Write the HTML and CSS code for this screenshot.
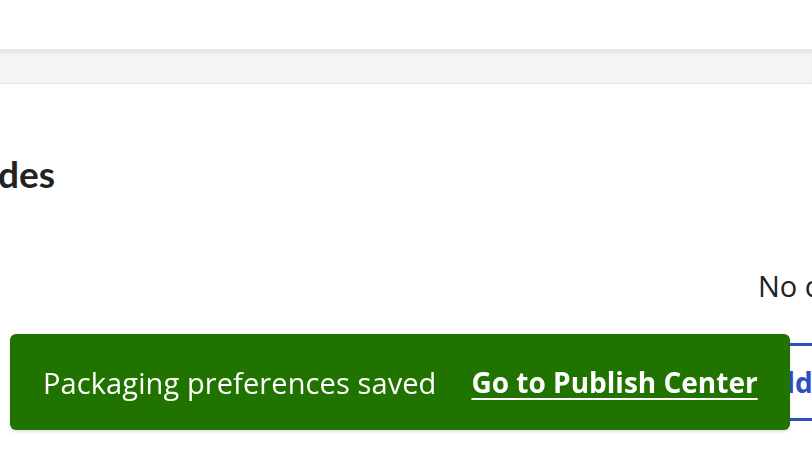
FILE: index.html
```html
<!DOCTYPE html>
<html lang="en">
<head>
<meta charset="utf-8">
<title>Packaging preferences</title>
<link rel="stylesheet" href="styles.css">
</head>
<body>
<header class="topbar"></header>
<nav class="subbar"></nav>
<main class="content">
  <h1 class="title">des</h1>
  <p class="empty">No c</p>
  <div class="actions">
    <button class="btn-outline" type="button">Add</button>
  </div>
</main>
<div class="toast" role="status">
  <span class="toast-msg">Packaging preferences saved</span>
  <a class="toast-link" href="#">Go to Publish Center</a>
</div>
</body>
</html>
```

FILE: styles.css
```css
html, body {
  margin: 0;
  padding: 0;
  overflow: hidden;
  width: 812px;
  height: 456px;
  background: #ffffff;
  font-family: "Open Sans", "Noto Sans", sans-serif;
  color: #222222;
}

.topbar {
  height: 49px;
  background: #ffffff;
}

.subbar {
  height: 32px;
  background: #f5f5f5;
  border-top: 2px solid #e6e6e6;
  border-bottom: 1px solid #e4e4e4;
  box-shadow: inset 0 4px 4px -2px rgba(0, 0, 0, 0.08);
}

.content {
  display: flex;
  flex-direction: column;
  white-space: nowrap;
}

.title {
  margin: 66px 0 0 -2px;
  font-family: "Lato", sans-serif;
  font-size: 37px;
  font-weight: 700;
  line-height: 48px;
  color: #222222;
}

.empty {
  margin: 70px 0 0 758px;
  font-size: 29px;
  line-height: 36px;
  color: #222222;
}

.actions {
  display: flex;
  padding-left: 743px;
  margin-top: 39px;
}

.btn-outline {
  flex: none;
  height: 78px;
  padding: 0 12px;
  border: 3px solid #2d4fc2;
  border-radius: 4px;
  background: #ffffff;
  color: #2d4fc2;
  font-family: inherit;
  font-size: 28px;
  font-weight: 700;
}

.toast {
  position: fixed;
  left: 10px;
  top: 334px;
  width: 780px;
  height: 96px;
  box-sizing: border-box;
  padding: 0 33px;
  display: flex;
  align-items: center;
  gap: 35px;
  background: #217300;
  border-radius: 6px;
  box-shadow: 0 2px 3px rgba(0, 0, 0, 0.12);
  color: #ffffff;
  font-size: 29px;
  white-space: nowrap;
}

.toast-msg {
  letter-spacing: 0.1px;
}

.toast-link {
  color: #ffffff;
  font-size: 28px;
  font-weight: 700;
  text-decoration: underline;
  text-underline-offset: 5px;
  text-decoration-thickness: 2px;
}
```
